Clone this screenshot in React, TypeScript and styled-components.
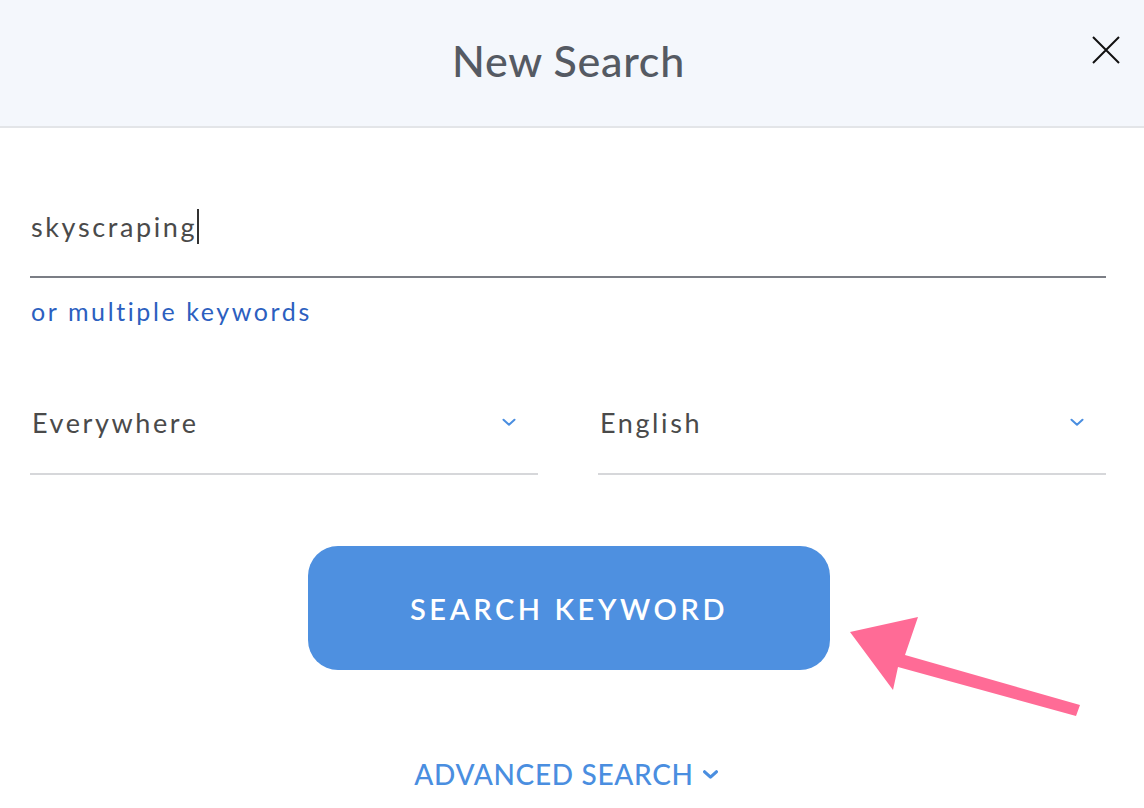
import styled, { createGlobalStyle } from 'styled-components';

const Global = createGlobalStyle`
	html, body {
		margin: 0;
		padding: 0;
		background: #ffffff;
	}
	* {
		box-sizing: border-box;
	}
`;

const Page = styled.div`
	position: relative;
	width: 1144px;
	height: 808px;
	overflow: hidden;
	font-family: Lato, 'Noto Sans', sans-serif;
	background: #ffffff;
`;

const Header = styled.div`
	height: 128px;
	padding: 0 7px 6px 0;
	background: #f4f7fc;
	border-bottom: 2px solid #e3e5e8;
	display: flex;
	align-items: center;
	justify-content: center;
	position: relative;
`;

const Title = styled.h1`
	margin: 0;
	font-size: 43px;
	font-weight: 500;
	color: #555a63;
	letter-spacing: 0.7px;
`;

const Close = styled.button`
	position: absolute;
	right: 24px;
	top: 36px;
	width: 28px;
	height: 28px;
	padding: 0;
	border: 0;
	background: none;
`;

const Body = styled.div`
	padding: 0 38px 0 30px;
	display: flex;
	flex-direction: column;
`;

const Field = styled.div<{ $strong?: boolean }>`
	display: flex;
	align-items: center;
	justify-content: space-between;
	border-bottom: 2px solid ${(p) => (p.$strong ? '#7b7e85' : '#d6d7da')};
`;

const KeywordField = styled(Field)`
	height: 150px;
	align-items: flex-end;
	padding-bottom: 32px;
`;

const Value = styled.span`
	font-size: 27px;
	color: #4a4a4a;
	letter-spacing: 2.6px;
	padding-left: 1px;
	display: flex;
	align-items: center;
`;

const Caret = styled.span`
	display: inline-block;
	width: 2px;
	height: 35px;
	background: #333;
`;

const MultiLink = styled.a`
	margin-top: 18px;
	font-size: 25px;
	color: #2c5fc0;
	letter-spacing: 2.6px;
	padding-left: 1px;
	cursor: pointer;
`;

const Selects = styled.div`
	display: grid;
	grid-template-columns: 1fr 1fr;
	gap: 60px;
	margin-top: 71px;
`;

const SelectBox = styled(Field)`
	height: 78px;
	padding: 0 22px 26px 1px;
`;

const ButtonRow = styled.div`
	display: flex;
	justify-content: center;
	margin-top: 71px;
	padding-left: 2px;
`;

const SearchButton = styled.button`
	width: 522px;
	height: 124px;
	border: 0;
	border-radius: 30px;
	background: #4e90e0;
	color: #ffffff;
	font-family: Lato, 'Noto Sans', sans-serif;
	font-size: 29px;
	font-weight: 600;
	letter-spacing: 3.6px;
`;

const Advanced = styled.div`
	display: flex;
	justify-content: center;
	align-items: center;
	gap: 9px;
	margin-top: 87px;
	padding-right: 4px;
	font-size: 28px;
	color: #4a8ee0;
	letter-spacing: 0.7px;
	font-weight: 500;
`;

const Arrow = styled.svg`
	position: absolute;
	left: 840px;
	top: 605px;
`;

function Chevron({ size = 14, weight = 2 }: { size?: number; weight?: number }) {
	return (
		<svg width={size} height={size * 0.6} viewBox="0 0 14 8" fill="none">
			<path d="M1.5 1.5 L7 6.5 L12.5 1.5" stroke="#4a8ee0" strokeWidth={weight} strokeLinecap="round" strokeLinejoin="round" />
		</svg>
	);
}

export default function App() {
	return (
		<Page>
			<Global />
			<Header>
				<Title>New Search</Title>
				<Close aria-label="close">
					<svg width="28" height="28" viewBox="0 0 28 28">
						<path d="M1 1 L27 27 M27 1 L1 27" stroke="#111" strokeWidth="2" />
					</svg>
				</Close>
			</Header>
			<Body>
				<KeywordField $strong>
					<Value>
						skyscraping
						<Caret />
					</Value>
				</KeywordField>
				<MultiLink>or multiple keywords</MultiLink>
				<Selects>
					<SelectBox>
						<Value>Everywhere</Value>
						<Chevron size={14} />
					</SelectBox>
					<SelectBox>
						<Value>English</Value>
						<Chevron size={14} />
					</SelectBox>
				</Selects>
				<ButtonRow>
					<SearchButton>SEARCH KEYWORD</SearchButton>
				</ButtonRow>
				<Advanced>
					ADVANCED SEARCH
					<Chevron size={15} weight={3} />
				</Advanced>
			</Body>
			<Arrow width="250" height="115" viewBox="0 0 250 115">
				<polygon points="10,27 78,12 65,50 240,100 236,111 58,62 53,85" fill="#ff6b96" />
			</Arrow>
		</Page>
	);
}
